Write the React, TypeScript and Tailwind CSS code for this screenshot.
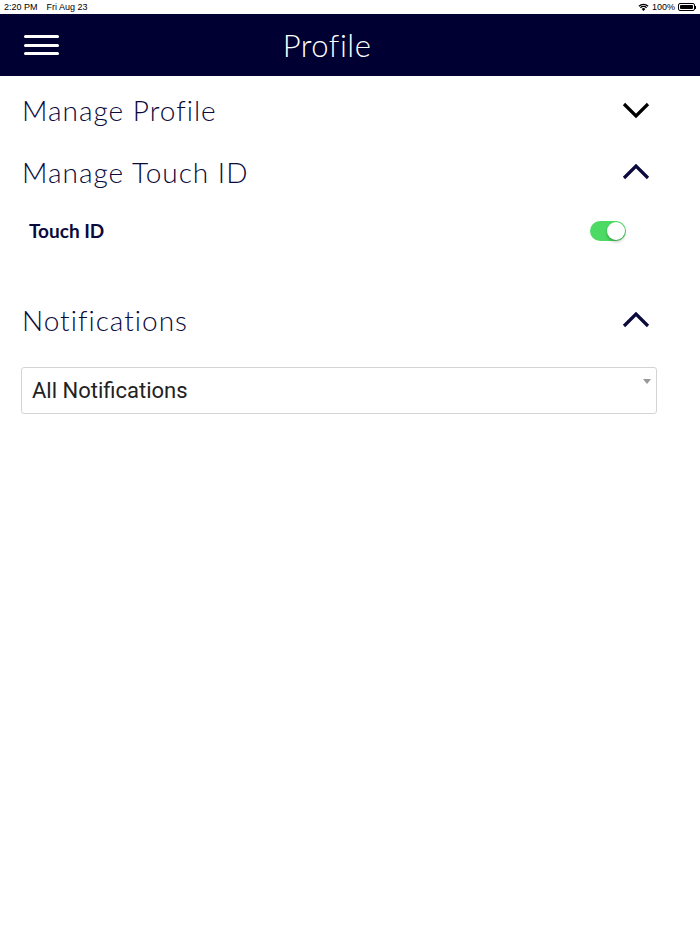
export default function App() {
  return (
    <div className="w-[700px] h-[934px] bg-white relative overflow-hidden">
      {/* status bar */}
      <div className="h-[14px] flex items-center justify-between px-[4px] text-[9px] text-black font-['Liberation_Sans',sans-serif] leading-none">
        <div className="flex gap-[9px]">
          <span>2:20 PM</span>
          <span>Fri Aug 23</span>
        </div>
        <div className="flex items-center gap-[3px]">
          <svg width="11" height="8" viewBox="0 0 11 8">
            <path d="M5.5 8 L3.6 6 A2.7 2.7 0 0 1 7.4 6 Z" fill="black" />
            <path d="M2.4 4.8 A4.4 4.4 0 0 1 8.6 4.8" stroke="black" strokeWidth="1.3" fill="none" />
            <path d="M0.9 3.2 A6.6 6.6 0 0 1 10.1 3.2" stroke="black" strokeWidth="1.3" fill="none" />
          </svg>
          <span>100%</span>
          <div className="flex items-center">
            <div className="w-[17px] h-[8px] rounded-[2px] border border-black p-[1px]">
              <div className="w-full h-full bg-black rounded-[1px]" />
            </div>
            <div className="w-[1px] h-[3px] bg-black" />
          </div>
        </div>
      </div>

      {/* header */}
      <div className="h-[62px] bg-[#000033] relative flex items-center justify-center pr-[46px]">
        <button className="absolute left-[24px] top-[21px] flex flex-col gap-[5.5px]">
          <span className="block w-[35px] h-[3px] bg-white rounded-full" />
          <span className="block w-[35px] h-[3px] bg-white rounded-full" />
          <span className="block w-[35px] h-[3px] bg-white rounded-full" />
        </button>
        <h1 className="text-white text-[31px] font-light font-['Lato',sans-serif] tracking-[0.5px]">Profile</h1>
      </div>

      {/* content */}
      <div className="px-[22px] font-['Lato',sans-serif] text-[#0a0a3c]">
        <div className="h-[66px] flex items-center justify-between pt-[2px]">
          <span className="text-[28px] font-light tracking-[1px]">Manage Profile</span>
          <svg width="28" height="16" viewBox="0 0 28 16" className="mr-[28px]">
            <path d="M2 2 L14 14 L26 2" stroke="#000" strokeWidth="3.2" fill="none" />
          </svg>
        </div>
        <div className="h-[60px] flex items-center justify-between">
          <span className="text-[28px] font-light tracking-[1px]">Manage Touch ID</span>
          <svg width="28" height="16" viewBox="0 0 28 16" className="mr-[28px]">
            <path d="M2 14 L14 2 L26 14" stroke="#0a0a3c" strokeWidth="3.2" fill="none" />
          </svg>
        </div>
        <div className="h-[54px] flex items-center justify-between pl-[7px] pt-[4px]">
          <span className="text-[19px] font-bold">Touch ID</span>
          <div className="w-[36px] h-[20px] rounded-full bg-[#4cd964] relative mr-[52px]">
            <div className="absolute right-[1px] top-[1px] w-[18px] h-[18px] rounded-full bg-white shadow-[0_2px_3px_rgba(0,0,0,0.25)]" />
          </div>
        </div>
        <div className="h-[43px]" />
        <div className="h-[42px] flex items-center justify-between">
          <span className="text-[28px] font-light tracking-[1px]">Notifications</span>
          <svg width="28" height="16" viewBox="0 0 28 16" className="mr-[28px]">
            <path d="M2 14 L14 2 L26 14" stroke="#0a0a3c" strokeWidth="3.2" fill="none" />
          </svg>
        </div>
        <div className="mt-[26px] h-[47px] mr-[21px] -ml-[1px] border border-[#d4d4d4] rounded-[3px] relative flex items-center pl-[10px]">
          <span className="text-[22px] text-[#222] font-['Roboto',sans-serif]">All Notifications</span>
          <svg width="8" height="5" viewBox="0 0 8 5" className="absolute right-[5px] top-[11px]">
            <path d="M0 0 L8 0 L4 5 Z" fill="#999" />
          </svg>
        </div>
      </div>
    </div>
  );
}
